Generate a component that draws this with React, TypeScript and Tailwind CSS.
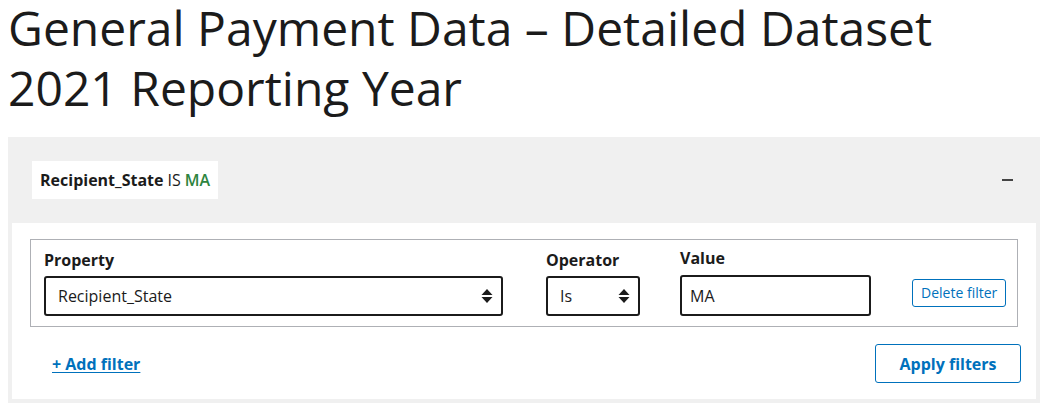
export default function App() {
  const font = { fontFamily: "'Open Sans', 'Liberation Sans', sans-serif" };
  return (
    <div className="bg-white text-[#1b1b1b] w-[1060px] h-[417px] overflow-hidden" style={font}>
      <h1 className="px-2 text-[48px] font-normal text-[#1b1b1b]">
        <span className="block leading-[56px]">General Payment Data – Detailed Dataset</span>
        <span className="block leading-[64px]">2021 Reporting Year</span>
      </h1>

      <section className="ml-2 w-[1032px] mt-[17px] bg-[#f0f0f0] px-1 pb-1">
        {/* Summary header */}
        <div className="flex items-center justify-between h-[86px] pl-5 pr-[23px]">
          <div className="bg-white h-[38px] px-2 flex items-center text-[16px]">
            <span className="font-bold">Recipient_State</span>
            <span className="ml-1">IS</span>
            <span className="ml-1 font-semibold text-[#2e8540]">MA</span>
          </div>
          <span className="block w-[11px] h-[2px] bg-[#444]" />
        </div>

        {/* Filter editor */}
        <div className="bg-white pt-4 pb-4">
          <div className="mx-[18px] border border-[#aeb0b5] h-[88px] pl-[13px] pr-3 flex items-start">
            <div className="w-[459px] shrink-0 pt-[8px]">
              <label className="block text-[16px] font-bold leading-[24px] mb-[4px]">Property</label>
              <div className="h-[40px] border-2 border-[#1b1b1b] rounded-[3px] flex items-center justify-between pl-3 pr-2 text-[16px]">
                <span>Recipient_State</span>
                <Arrows />
              </div>
            </div>
            <div className="w-[94px] shrink-0 ml-[43px] pt-[8px]">
              <label className="block text-[16px] font-bold leading-[24px] mb-[4px]">Operator</label>
              <div className="h-[40px] border-2 border-[#1b1b1b] rounded-[3px] flex items-center justify-between pl-3 pr-2 text-[16px]">
                <span>Is</span>
                <Arrows />
              </div>
            </div>
            <div className="w-[191px] shrink-0 ml-[40px] pt-[6px]">
              <label className="block text-[16px] font-bold leading-[24px] mb-[5px]">Value</label>
              <div className="h-[41px] border-2 border-[#1b1b1b] rounded-[3px] flex items-center px-2 text-[16px]">
                MA
              </div>
            </div>
            <button className="shrink-0 whitespace-nowrap ml-[41px] mt-[39px] h-[28px] px-2 border border-[#0071bc] rounded-[3px] text-[#0071bc] text-[14px] leading-none bg-white">
              Delete filter
            </button>
          </div>

          <div className="flex items-center justify-between mt-[17px] pl-[40px] pr-[15px]">
            <a href="#" className="text-[#0071bc] font-bold text-[16px] underline underline-offset-2">
              + Add filter
            </a>
            <button className="h-[39px] w-[146px] border border-[#0071bc] rounded-[3px] text-[#0071bc] font-bold text-[16px] bg-white">
              Apply filters
            </button>
          </div>
        </div>
      </section>
    </div>
  );
}

function Arrows() {
  return (
    <svg width="12" height="16" viewBox="0 0 12 16" fill="#1b1b1b">
      <path d="M6 1 L11.5 7 H0.5 Z" />
      <path d="M6 15 L11.5 9 H0.5 Z" />
    </svg>
  );
}
